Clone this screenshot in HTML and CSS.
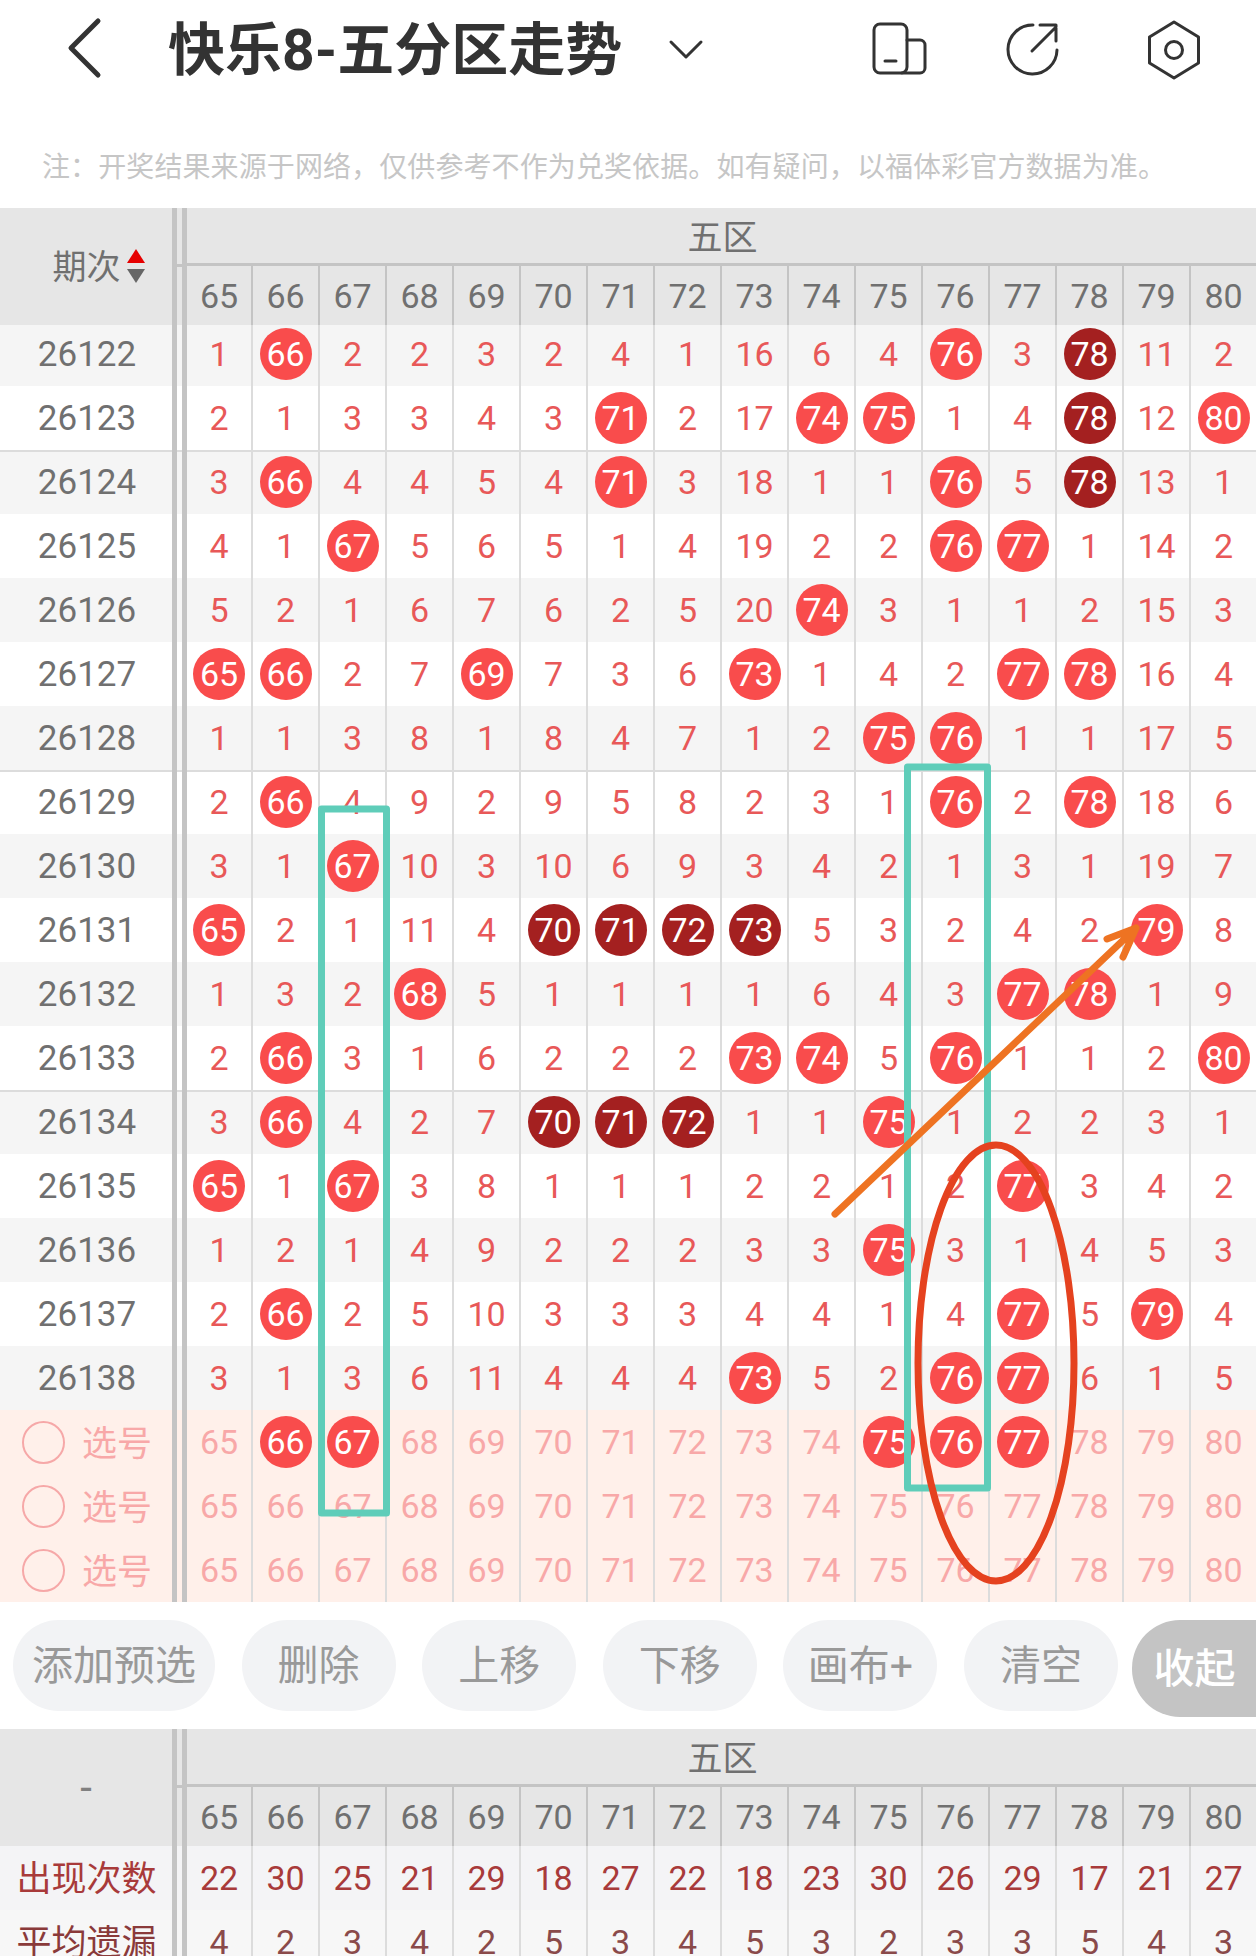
FILE: index.html
```html
<!DOCTYPE html>
<html lang="zh-CN">
<head>
<meta charset="utf-8">
<title>快乐8-五分区走势</title>
<link rel="stylesheet" href="styles.css">
</head>
<body>
<div class="page">
<header class="top">
  <svg class="back" width="40" height="64" viewBox="0 0 40 64"><path d="M32 5 5 32l27 27"/></svg>
  <h1 class="title">快乐8-五分区走势</h1>
  <svg class="caret" width="36" height="22" viewBox="0 0 36 22"><path d="M3 3l15 15L33 3"/></svg>
  <svg class="icon first" width="56" height="56" viewBox="0 0 56 56"><rect x="2" y="2" width="33" height="49" rx="6"/><path d="M35 18h13a5 5 0 0 1 5 5v23a5 5 0 0 1-5 5H30"/><path d="M13 39h11"/></svg>
  <svg class="icon second" width="56" height="56" viewBox="0 0 56 56"><path d="M30 3a24.500 24.500 0 1 0 24 25"/><path d="M29 29 53 5M37 3h16v16"/></svg>
  <svg class="icon third" width="56" height="60" viewBox="0 0 56 60"><path d="M27 2l24.500 15v26L27 58 2.500 43V17z"/><circle cx="27" cy="30" r="8.500"/></svg>
</header>
<p class="note">注：开奖结果来源于网络，仅供参考不作为兑奖依据。如有疑问，以福体彩官方数据为准。</p>

<section class="head">
  <div class="corner"><span class="cjk">期次</span><span class="sort"><em class="up"></em><em class="down"></em></span></div>
  <div class="bars"></div>
  <div class="zone">五区</div>
  <div class="nums"><i>65</i><i>66</i><i>67</i><i>68</i><i>69</i><i>70</i><i>71</i><i>72</i><i>73</i><i>74</i><i>75</i><i>76</i><i>77</i><i>78</i><i>79</i><i>80</i></div>
</section>
<section class="rows">
<div class="row odd"><span class="id">26122</span><span class="bars"></span><i>1</i><i><b>66</b></i><i>2</i><i>2</i><i>3</i><i>2</i><i>4</i><i>1</i><i>16</i><i>6</i><i>4</i><i><b>76</b></i><i>3</i><i><b class="dark">78</b></i><i>11</i><i>2</i></div>
<div class="row"><span class="id">26123</span><span class="bars"></span><i>2</i><i>1</i><i>3</i><i>3</i><i>4</i><i>3</i><i><b>71</b></i><i>2</i><i>17</i><i><b>74</b></i><i><b>75</b></i><i>1</i><i>4</i><i><b class="dark">78</b></i><i>12</i><i><b>80</b></i></div>
<div class="row odd sep"><span class="id">26124</span><span class="bars"></span><i>3</i><i><b>66</b></i><i>4</i><i>4</i><i>5</i><i>4</i><i><b>71</b></i><i>3</i><i>18</i><i>1</i><i>1</i><i><b>76</b></i><i>5</i><i><b class="dark">78</b></i><i>13</i><i>1</i></div>
<div class="row"><span class="id">26125</span><span class="bars"></span><i>4</i><i>1</i><i><b>67</b></i><i>5</i><i>6</i><i>5</i><i>1</i><i>4</i><i>19</i><i>2</i><i>2</i><i><b>76</b></i><i><b>77</b></i><i>1</i><i>14</i><i>2</i></div>
<div class="row odd"><span class="id">26126</span><span class="bars"></span><i>5</i><i>2</i><i>1</i><i>6</i><i>7</i><i>6</i><i>2</i><i>5</i><i>20</i><i><b>74</b></i><i>3</i><i>1</i><i>1</i><i>2</i><i>15</i><i>3</i></div>
<div class="row"><span class="id">26127</span><span class="bars"></span><i><b>65</b></i><i><b>66</b></i><i>2</i><i>7</i><i><b>69</b></i><i>7</i><i>3</i><i>6</i><i><b>73</b></i><i>1</i><i>4</i><i>2</i><i><b>77</b></i><i><b>78</b></i><i>16</i><i>4</i></div>
<div class="row odd"><span class="id">26128</span><span class="bars"></span><i>1</i><i>1</i><i>3</i><i>8</i><i>1</i><i>8</i><i>4</i><i>7</i><i>1</i><i>2</i><i><b>75</b></i><i><b>76</b></i><i>1</i><i>1</i><i>17</i><i>5</i></div>
<div class="row sep"><span class="id">26129</span><span class="bars"></span><i>2</i><i><b>66</b></i><i>4</i><i>9</i><i>2</i><i>9</i><i>5</i><i>8</i><i>2</i><i>3</i><i>1</i><i><b>76</b></i><i>2</i><i><b>78</b></i><i>18</i><i>6</i></div>
<div class="row odd"><span class="id">26130</span><span class="bars"></span><i>3</i><i>1</i><i><b>67</b></i><i>10</i><i>3</i><i>10</i><i>6</i><i>9</i><i>3</i><i>4</i><i>2</i><i>1</i><i>3</i><i>1</i><i>19</i><i>7</i></div>
<div class="row"><span class="id">26131</span><span class="bars"></span><i><b>65</b></i><i>2</i><i>1</i><i>11</i><i>4</i><i><b class="dark">70</b></i><i><b class="dark">71</b></i><i><b class="dark">72</b></i><i><b class="dark">73</b></i><i>5</i><i>3</i><i>2</i><i>4</i><i>2</i><i><b>79</b></i><i>8</i></div>
<div class="row odd"><span class="id">26132</span><span class="bars"></span><i>1</i><i>3</i><i>2</i><i><b>68</b></i><i>5</i><i>1</i><i>1</i><i>1</i><i>1</i><i>6</i><i>4</i><i>3</i><i><b>77</b></i><i><b>78</b></i><i>1</i><i>9</i></div>
<div class="row"><span class="id">26133</span><span class="bars"></span><i>2</i><i><b>66</b></i><i>3</i><i>1</i><i>6</i><i>2</i><i>2</i><i>2</i><i><b>73</b></i><i><b>74</b></i><i>5</i><i><b>76</b></i><i>1</i><i>1</i><i>2</i><i><b>80</b></i></div>
<div class="row odd sep"><span class="id">26134</span><span class="bars"></span><i>3</i><i><b>66</b></i><i>4</i><i>2</i><i>7</i><i><b class="dark">70</b></i><i><b class="dark">71</b></i><i><b class="dark">72</b></i><i>1</i><i>1</i><i><b>75</b></i><i>1</i><i>2</i><i>2</i><i>3</i><i>1</i></div>
<div class="row"><span class="id">26135</span><span class="bars"></span><i><b>65</b></i><i>1</i><i><b>67</b></i><i>3</i><i>8</i><i>1</i><i>1</i><i>1</i><i>2</i><i>2</i><i>1</i><i>2</i><i><b>77</b></i><i>3</i><i>4</i><i>2</i></div>
<div class="row odd"><span class="id">26136</span><span class="bars"></span><i>1</i><i>2</i><i>1</i><i>4</i><i>9</i><i>2</i><i>2</i><i>2</i><i>3</i><i>3</i><i><b>75</b></i><i>3</i><i>1</i><i>4</i><i>5</i><i>3</i></div>
<div class="row"><span class="id">26137</span><span class="bars"></span><i>2</i><i><b>66</b></i><i>2</i><i>5</i><i>10</i><i>3</i><i>3</i><i>3</i><i>4</i><i>4</i><i>1</i><i>4</i><i><b>77</b></i><i>5</i><i><b>79</b></i><i>4</i></div>
<div class="row odd"><span class="id">26138</span><span class="bars"></span><i>3</i><i>1</i><i>3</i><i>6</i><i>11</i><i>4</i><i>4</i><i>4</i><i><b>73</b></i><i>5</i><i>2</i><i><b>76</b></i><i><b>77</b></i><i>6</i><i>1</i><i>5</i></div>
<div class="row pick"><span class="choose"><em class="ring"></em><span class="cjk">选号</span></span><span class="bars"></span><i>65</i><i><b>66</b></i><i><b>67</b></i><i>68</i><i>69</i><i>70</i><i>71</i><i>72</i><i>73</i><i>74</i><i><b>75</b></i><i><b>76</b></i><i><b>77</b></i><i>78</i><i>79</i><i>80</i></div>
<div class="row pick"><span class="choose"><em class="ring"></em><span class="cjk">选号</span></span><span class="bars"></span><i>65</i><i>66</i><i>67</i><i>68</i><i>69</i><i>70</i><i>71</i><i>72</i><i>73</i><i>74</i><i>75</i><i>76</i><i>77</i><i>78</i><i>79</i><i>80</i></div>
<div class="row pick"><span class="choose"><em class="ring"></em><span class="cjk">选号</span></span><span class="bars"></span><i>65</i><i>66</i><i>67</i><i>68</i><i>69</i><i>70</i><i>71</i><i>72</i><i>73</i><i>74</i><i>75</i><i>76</i><i>77</i><i>78</i><i>79</i><i>80</i></div>
</section>

<nav class="actions">
  <button class="btn">添加预选</button>
  <button class="btn">删除</button>
  <button class="btn">上移</button>
  <button class="btn">下移</button>
  <button class="btn">画布+</button>
  <button class="btn">清空</button>
  <button class="btn fold">收起</button>
</nav>

<section class="head">
  <div class="corner dash">-</div>
  <div class="bars"></div>
  <div class="zone">五区</div>
  <div class="nums"><i>65</i><i>66</i><i>67</i><i>68</i><i>69</i><i>70</i><i>71</i><i>72</i><i>73</i><i>74</i><i>75</i><i>76</i><i>77</i><i>78</i><i>79</i><i>80</i></div>
</section>
<section class="stats">
<div class="row count"><span class="id label">出现次数</span><span class="bars"></span><i>22</i><i>30</i><i>25</i><i>21</i><i>29</i><i>18</i><i>27</i><i>22</i><i>18</i><i>23</i><i>30</i><i>26</i><i>29</i><i>17</i><i>21</i><i>27</i></div>
<div class="row avg"><span class="id label">平均遗漏</span><span class="bars"></span><i>4</i><i>2</i><i>3</i><i>4</i><i>2</i><i>5</i><i>3</i><i>4</i><i>5</i><i>3</i><i>2</i><i>3</i><i>3</i><i>5</i><i>4</i><i>3</i></div>
</section>

<svg class="marks" width="1256" height="1956" viewBox="0 0 1256 1956">
  <rect class="teal" x="321.500" y="809" width="65" height="704"/>
  <rect class="teal" x="907.500" y="767" width="80" height="721"/>
  <ellipse class="oval" cx="996" cy="1363" rx="78" ry="218"/>
  <path class="arrow" d="M835 1214 1136 928M1107 939l29-11-13 29"/>
</svg>
</div>
</body>
</html>
```
FILE: styles.css
```css
html, body { margin: 0; padding: 0; height: 1956px; overflow: hidden; background: #fff; }
body { font-family: Roboto, "Noto Sans CJK SC", sans-serif; color: #707070; }
i, em { font-style: normal; }
.page { position: relative; width: 1256px; height: 1956px; overflow: hidden; }

.top { display: flex; align-items: center; height: 96px; }
.back { margin-left: 66px; fill: none; stroke: #333; stroke-width: 5; stroke-linecap: round; stroke-linejoin: round; }
.title { margin: 6px 0 0 62px; font-size: 57px; line-height: 70px; font-weight: 700; color: #333; white-space: nowrap; }
.caret { margin-left: 46px; margin-top: 3px; fill: none; stroke: #333; stroke-width: 3; stroke-linecap: round; stroke-linejoin: round; }
.icon { fill: none; stroke: #333; stroke-width: 3; stroke-linecap: round; stroke-linejoin: round; margin-top: 4px; flex: none; }
.first { margin-left: 168px; }
.second { margin-left: 75px; }
.third { margin-left: 88px; }

.note { margin: 0; height: 80px; padding: 32px 0 0 42px; font-size: 28px; letter-spacing: 0.1px; line-height: 80px; color: #c6c6c6; white-space: nowrap; }

.head { position: relative; z-index: 1; display: grid; grid-template-columns: 172px 15px 1fr; grid-template-rows: 58px 59px; height: 117px; background: #e6e6e6; }
.corner { grid-row: 1 / 3; display: flex; align-items: center; justify-content: center; gap: 6px; font-size: 34px; padding: 0 0 2px 25px; }
.corner .cjk { margin-top: -3px; }
.sort { display: flex; flex-direction: column; gap: 6px; }
.up { width: 0; height: 0; border: 9px solid transparent; border-top: 0; border-bottom: 14px solid #e60000; }
.down { width: 0; height: 0; border: 9px solid transparent; border-bottom: 0; border-top: 14px solid #666; }
.dash { color: #808080; padding: 0; font-size: 42px; font-weight: 400; }
.head > .bars { grid-row: 1 / 3; }
.bars { position: relative; box-sizing: border-box; border-left: 5px solid #c4c4c4; border-right: 5px solid #c4c4c4; }
.head > .bars::after { content: ""; position: absolute; left: 0; top: 56px; width: 5px; height: 3px; background: #c4c4c4; }
.zone { display: flex; align-items: center; justify-content: center; box-sizing: border-box; font-size: 35px; border-bottom: 3px solid #c4c4c4; padding-bottom: 2px; }
.nums { grid-column: 3; display: grid; grid-template-columns: 66px repeat(15, 67px); }

.row { display: grid; grid-template-columns: 172px 15px 66px repeat(15, 67px); height: 64px; background: #fff; color: #e85858; }
.nums i, .row i { display: flex; align-items: center; justify-content: center; box-sizing: border-box; font-size: 34px; border-right: 2px solid #dcdcdc; }
.nums i { border-right-color: #c4c4c4; color: #707070; }
.nums i:last-child, .row i:last-child { border-right-color: transparent; }
.rows { margin-top: -3px; }
.odd { background: #f5f5f5; }
.sep { box-shadow: inset 0 2px 0 #dcdcdc; }
.row b { display: flex; align-items: center; justify-content: center; width: 52px; height: 52px; border-radius: 50%; background: #f94c4c; color: #fff; font-weight: 400; }
.row b.dark { background: #a42020; }
.id { display: flex; align-items: center; justify-content: center; font-size: 35px; color: #707070; padding-left: 2px; }
.label { padding: 0 0 5px 1px; }
.pick { background: #fff0ea; color: #f8a8a8; }
.choose { display: flex; align-items: center; padding-left: 22px; gap: 17px; font-size: 35px; }
.choose .cjk { margin-top: -3px; }
.ring { box-sizing: border-box; width: 43px; height: 43px; border: 2px solid #f6a8a8; border-radius: 50%; }

.actions { display: flex; align-items: flex-start; gap: 26.600px; box-sizing: border-box; height: 127px; padding: 18px 0 0 13px; overflow: hidden; }
.btn { flex: none; box-sizing: border-box; height: 91px; min-width: 154px; padding: 0 19px 8px; border: 0; border-radius: 46px; background: #f2f3f5; color: #999; font: 400 41px Roboto, "Noto Sans CJK SC", sans-serif; white-space: nowrap; }
.fold { width: 200px; height: 97px; margin-left: -13px; padding: 0 98px 8px 22px; border-radius: 48px; background: #c4c4c4; color: #fff; font-weight: 500; }

.count { background: #f4f4f6; color: #a83a3a; }
.count .id { color: #a83a3a; }
.avg { background: #f7f7f7; color: #8a4a4a; }
.avg .id { color: #8a3a3a; }

.marks { position: absolute; left: 0; top: 0; fill: none; pointer-events: none; z-index: 2; }
.teal { stroke: #5fcdb9; stroke-width: 7; stroke-linejoin: round; }
.oval { stroke: #e5421f; stroke-width: 7; }
.arrow { stroke: #ee7322; stroke-width: 7; stroke-linecap: round; stroke-linejoin: round; }
```
